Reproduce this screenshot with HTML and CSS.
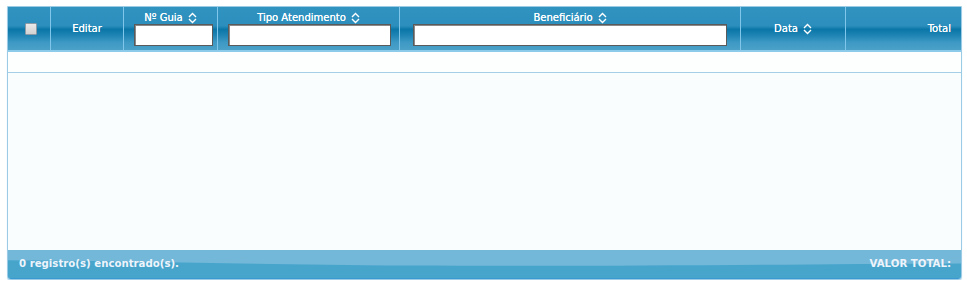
FILE: index.html
```html
<!DOCTYPE html>
<html lang="pt">
<head>
<meta charset="utf-8">
<title>Guias</title>
<link rel="stylesheet" href="styles.css">
</head>
<body>
<div class="panel">
  <div class="head">
    <div class="hc hc-check"><span class="checkbox"></span></div>
    <div class="hc hc-mid">Editar</div>
    <div class="hc hc-filter">
      <span class="label">Nº Guia <svg class="sort" viewBox="0 0 9 12" width="9" height="12"><path d="M1 5 L4.5 1.5 L8 5 M1 7 L4.5 10.5 L8 7" fill="none" stroke="#fff" stroke-width="1.4"/></svg></span>
      <input class="filter w-guia" type="text">
    </div>
    <div class="hc hc-filter">
      <span class="label">Tipo Atendimento <svg class="sort" viewBox="0 0 9 12" width="9" height="12"><path d="M1 5 L4.5 1.5 L8 5 M1 7 L4.5 10.5 L8 7" fill="none" stroke="#fff" stroke-width="1.4"/></svg></span>
      <input class="filter w-tipo" type="text">
    </div>
    <div class="hc hc-filter">
      <span class="label">Beneficiário <svg class="sort" viewBox="0 0 9 12" width="9" height="12"><path d="M1 5 L4.5 1.5 L8 5 M1 7 L4.5 10.5 L8 7" fill="none" stroke="#fff" stroke-width="1.4"/></svg></span>
      <input class="filter w-benef" type="text">
    </div>
    <div class="hc hc-mid">Data <svg class="sort" viewBox="0 0 9 12" width="9" height="12"><path d="M1 5 L4.5 1.5 L8 5 M1 7 L4.5 10.5 L8 7" fill="none" stroke="#fff" stroke-width="1.4"/></svg></div>
    <div class="hc hc-right">Total</div>
  </div>
  <div class="empty-row"></div>
  <div class="body"></div>
  <div class="foot">
    <svg class="wave" viewBox="0 0 953 27" preserveAspectRatio="none"><path d="M0 10 C150 11 250 14 400 15 C600 16 750 14 953 13 L953 27 L0 27 Z" fill="#47a5cc"/></svg>
    <span class="foot-text">0 registro(s) encontrado(s).</span>
    <span class="foot-text">VALOR TOTAL:</span>
  </div>
</div>
</body>
</html>
```
FILE: styles.css
```css
html, body {
  margin: 0;
  padding: 0;
  background: #ffffff;
}
body {
  padding: 6px 5px 0 7px;
  font-family: "DejaVu Sans", Verdana, sans-serif;
}
.panel {
  width: 953px;
  border: 1px solid #9ccbe6;
  border-radius: 0 0 4px 4px;
  background: #fafdfd;
  box-shadow: 0 1px 1px #b7dcef;
}
.head {
  display: grid;
  grid-template-columns: 42px 73px 94px 182px 341px 105px 1fr;
  height: 43px;
  background: linear-gradient(to bottom, #3193c0 0%, #2b8ebc 44%, #0a76a8 52%, #1f84b4 66%, #3d99c4 82%, #4ba1c8 100%);
  border-bottom: 2px solid #8dcbea;
  color: #ffffff;
  font-size: 10px;
  text-shadow: 0 0 0.4px #ffffff;
}
.hc {
  border-left: 1px solid #7fc6ea;
  display: flex;
  align-items: center;
  justify-content: center;
}
.hc-check {
  border-left: none;
  padding-left: 3px;
}
.checkbox {
  width: 10px;
  height: 10px;
  border: 1px solid #8c9ba6;
  background: linear-gradient(to bottom, #e9e9e9, #d2d2d2);
  border-radius: 1px;
}
.hc-filter {
  flex-direction: column;
  justify-content: flex-start;
  padding-top: 4px;
  gap: 0;
}
.label {
  display: flex;
  align-items: center;
  gap: 5px;
  height: 13px;
}
.hc-mid {
  gap: 5px;
}
.sort {
  display: block;
}
.hc-right {
  justify-content: flex-end;
  padding-right: 10px;
}
.filter {
  box-sizing: border-box;
  height: 22px;
  margin: 0;
  padding: 0 3px;
  border: 1px solid #5a5a5a;
  box-shadow: inset 1px 1px 0 #8a8a8a;
  background: #ffffff;
  outline: none;
}
.w-guia { width: 79px; margin-left: 6px; }
.w-tipo { width: 163px; margin-left: 2px; }
.w-benef { width: 314px; }
.empty-row {
  height: 20px;
  background: #fdfefe;
  border-bottom: 1px solid #a6cfe7;
}
.body {
  height: 177px;
}
.foot {
  position: relative;
  height: 26px;
  background: #73b8d8;
  border-bottom: 1px solid #3b99d2;
  border-radius: 0 0 3px 3px;
  display: flex;
  justify-content: space-between;
  align-items: center;
  padding: 0 10px 2px 11px;
  color: #eef4fb;
  font-size: 10.2px;
  font-weight: bold;
  overflow: hidden;
}
.wave {
  position: absolute;
  left: 0;
  top: 0;
  width: 100%;
  height: 100%;
}
.foot-text {
  position: relative;
}
```
